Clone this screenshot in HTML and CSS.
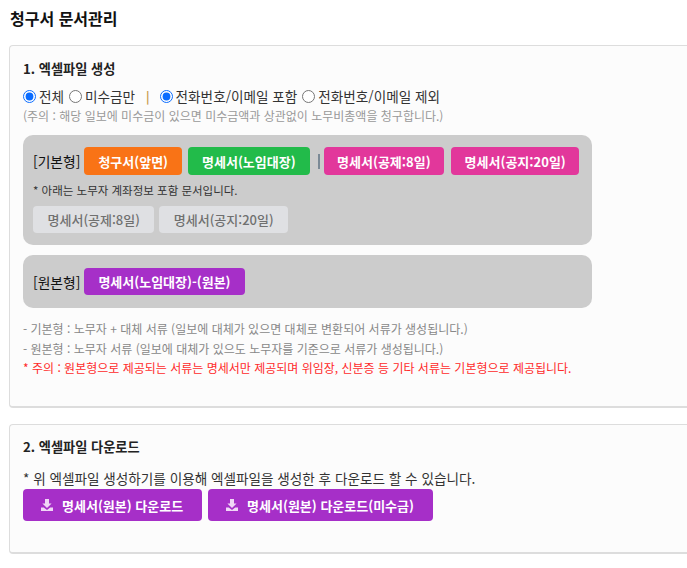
FILE: index.html
```html
<!DOCTYPE html>
<html lang="ko">
<head>
  <meta charset="UTF-8" />
  <title>청구서 문서관리</title>
  <link rel="stylesheet" href="styles.css">
</head>
<body>
  <div class="page">
    <h2 class="page-title">청구서 문서관리</h2>

    <div class="card card-make">
      <h3 class="card-title">1. 엑셀파일 생성</h3>

      <div class="radio-row">
        <label><input type="radio" name="scope" checked>전체</label>
        <label><input type="radio" name="scope">미수금만</label>
        <span class="radio-sep">|</span>
        <label><input type="radio" name="contact" checked>전화번호/이메일 포함</label>
        <label><input type="radio" name="contact">전화번호/이메일 제외</label>
      </div>
      <p class="hint">(주의 : 해당 일보에 미수금이 있으면 미수금액과 상관없이 노무비총액을 청구합니다.)</p>

      <div class="panel panel-basic">
        <div class="btn-row">
          <span class="panel-label">[기본형]</span>
          <button class="btn btn-orange">청구서(앞면)</button>
          <button class="btn btn-green">명세서(노임대장)</button>
          <span class="btn-sep"></span>
          <button class="btn btn-pink">명세서(공제:8일)</button>
          <button class="btn btn-pink">명세서(공지:20일)</button>
        </div>
        <p class="panel-note">* 아래는 노무자 계좌정보 포함 문서입니다.</p>
        <div class="btn-row btn-row-light">
          <button class="btn btn-light">명세서(공제:8일)</button>
          <button class="btn btn-light">명세서(공지:20일)</button>
        </div>
      </div>

      <div class="panel panel-origin">
        <div class="btn-row">
          <span class="panel-label">[원본형]</span>
          <button class="btn btn-purple">명세서(노임대장)-(원본)</button>
        </div>
      </div>

      <ul class="notes">
        <li>- 기본형 : 노무자 + 대체 서류 (일보에 대체가 있으면 대체로 변환되어 서류가 생성됩니다.)</li>
        <li>- 원본형 : 노무자 서류 (일보에 대체가 있으도 노무자를 기준으로 서류가 생성됩니다.)</li>
        <li class="notes-warn">* 주의 : 원본형으로 제공되는 서류는 명세서만 제공되며 위임장, 신분증 등 기타 서류는 기본형으로 제공됩니다.</li>
      </ul>
    </div>

    <div class="card card-down">
      <h3 class="card-title">2. 엑셀파일 다운로드</h3>
      <p class="down-text">* 위 엑셀파일 생성하기를 이용해 엑셀파일을 생성한 후 다운로드 할 수 있습니다.</p>
      <div class="down-row">
        <button class="btn btn-purple btn-down">
          <svg class="ico" viewBox="0 0 14 14"><path d="M5 1h4v4.500h2.600L7 10 2.400 5.500H5z"/><path d="M1 9.500h2.800L7 12l3.200-2.500H13V13H1z"/></svg>
          명세서(원본) 다운로드
        </button>
        <button class="btn btn-purple btn-down">
          <svg class="ico" viewBox="0 0 14 14"><path d="M5 1h4v4.500h2.600L7 10 2.400 5.500H5z"/><path d="M1 9.500h2.800L7 12l3.200-2.500H13V13H1z"/></svg>
          명세서(원본) 다운로드(미수금)
        </button>
      </div>
    </div>
  </div>
</body>
</html>
```

FILE: styles.css
```css
html, body {
  margin: 0;
  padding: 0;
  background: #fff;
  font-family: "Noto Sans CJK KR", "Noto Sans", sans-serif;
  color: #222;
}

.page {
  padding: 8px 0 0 9px;
}

.page-title {
  margin: 0 0 17px 1px;
  font-size: 16px;
  line-height: 20px;
  font-weight: 700;
  color: #111;
}

/* 오른쪽은 화면 밖으로 이어지는 카드처럼 보이게 */
.card {
  background: #fcfcfc;
  border: 1px solid #ddd;
  border-bottom: 2px solid #ddd;
  border-right: none;
  border-radius: 4px 0 0 4px;
  padding: 13px;
  box-sizing: border-box;
}

.card-make {
  height: 363px;
  margin-bottom: 16px;
}

.card-down {
  height: 130px;
  padding-top: 12px;
}

.card-title {
  margin: 1px 0 8px;
  font-size: 13.2px;
  line-height: 18px;
  font-weight: 700;
  color: #222;
}

.radio-row {
  display: flex;
  align-items: center;
  font-size: 13.6px;
  line-height: 20px;
  color: #333;
}

.radio-row label {
  display: flex;
  align-items: center;
  margin-right: 5px;
}

.radio-row input {
  margin: 0 3px 0 0;
  accent-color: #0a6cff;
}

.radio-sep {
  margin: 0 10px 0 6px;
  color: #c89a4a;
  font-size: 12px;
  font-weight: 700;
}

.hint {
  margin: 1px 0 10px;
  font-size: 12px;
  line-height: 18px;
  color: #999;
}

.panel {
  width: 569px;
  background: #ccc;
  border-radius: 10px;
  padding: 12px 10px;
  box-sizing: border-box;
}

.panel-basic {
  height: 110px;
  margin-bottom: 10px;
}

.panel-origin {
  height: 53px;
  padding-top: 13px;
}

.btn-row {
  display: flex;
  align-items: center;
}

.panel-label {
  font-size: 13.8px;
  color: #111;
  margin-right: 4px;
  white-space: nowrap;
  flex-shrink: 0;
}

.btn {
  border: none;
  border-radius: 4px;
  font-family: inherit;
  font-size: 13px;
  font-weight: 700;
  color: #fff;
  height: 28px;
  padding: 0 14px;
  margin: 0 6px 0 0;
  white-space: nowrap;
  cursor: pointer;
  flex-shrink: 0;
}

.btn-orange { background: #f97316; }
.btn-green { background: #22bb4a; }
.btn-pink { background: #e2379b; margin-right: 7px; padding: 0 13.500px; }
.btn-purple { background: #a62fc8; height: 27px; }

.btn-light {
  background: #dfe0e3;
  color: #707070;
  font-weight: 500;
  height: 27px;
  padding: 0 14.500px;
  margin-right: 5px;
}

.btn-sep {
  flex-shrink: 0;
  width: 2px;
  height: 15px;
  background: #7b8a96;
  margin: 0 4px 0 2px;
}

.panel-note {
  margin: 7px 0 7px;
  font-size: 11.5px;
  line-height: 17px;
  color: #333;
}

.notes {
  list-style: none;
  margin: 11px 0 0;
  padding: 0;
  font-size: 12px;
  line-height: 19.500px;
  color: #888;
}

.notes-warn {
  color: #ff2a2a;
}

.down-text {
  margin: 13px 0 2px;
  font-size: 13.6px;
  line-height: 18px;
  color: #333;
}

.down-row {
  display: flex;
}

.btn-down {
  display: flex;
  align-items: center;
  height: 32px;
  padding: 0 19px 0 17px;
  font-size: 13px;
}

.ico {
  width: 14px;
  height: 14px;
  margin-right: 8px;
  fill: #f0d6f6;
}
```
